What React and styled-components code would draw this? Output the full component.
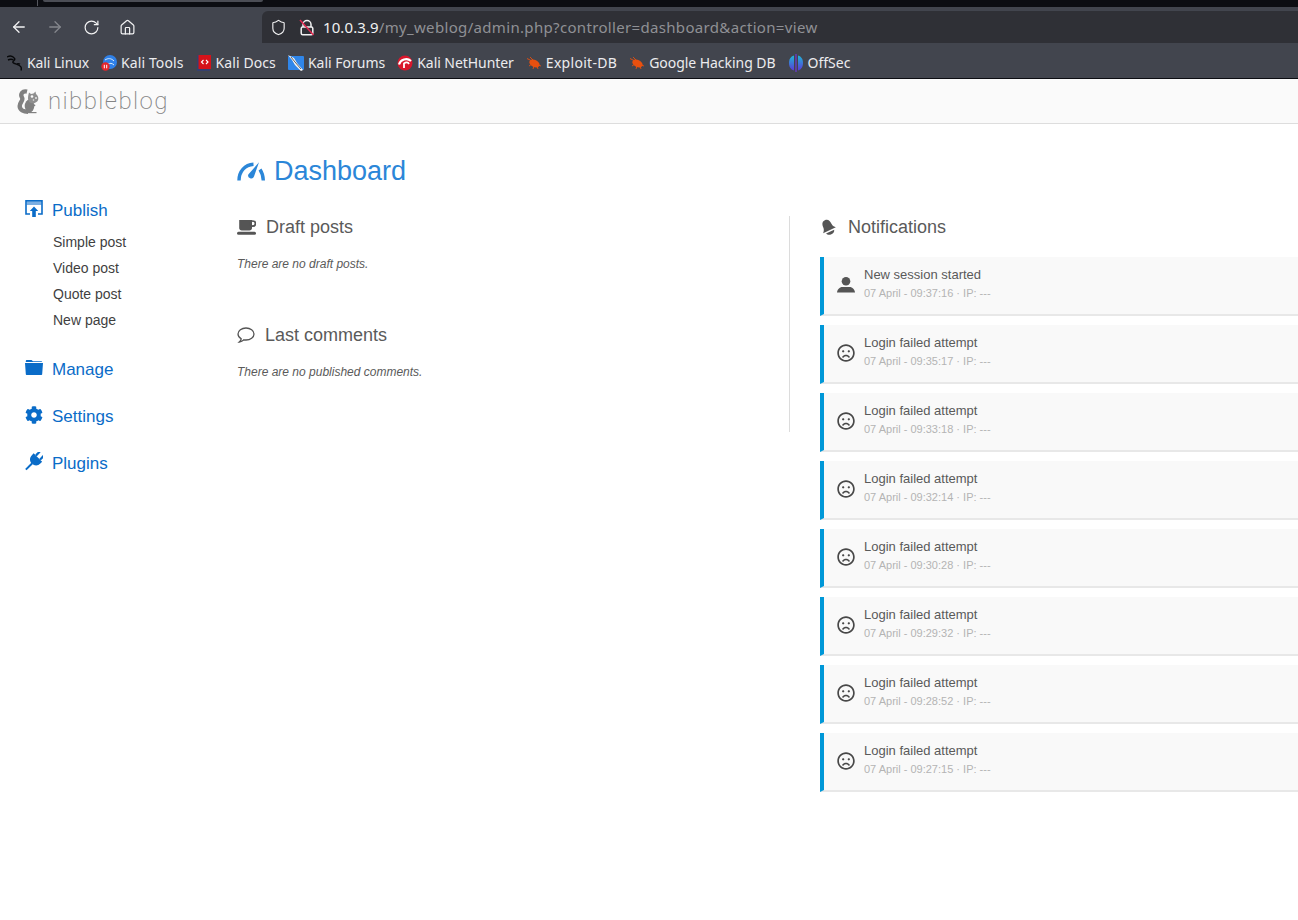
import React from "react";
import styled, { createGlobalStyle } from "styled-components";
import { ArrowLeft, ArrowRight, RotateCw, Home, Shield } from "lucide-react";
import { FaRegFrown, FaCog } from "react-icons/fa";

const GlobalStyle = createGlobalStyle`
  html, body { margin: 0; padding: 0; background: #fff; }
  body { font-family: "Liberation Sans", Arial, sans-serif; width: 1298px; height: 920px; overflow: hidden; }
  * { box-sizing: border-box; }
`;

const Page = styled.div`
  width: 1298px;
  height: 920px;
  display: flex;
  flex-direction: column;
  overflow: hidden;
`;

const TopStrip = styled.div`
  height: 7px;
  background: #0c0d12;
  display: flex;
  padding-left: 37px;
`;
const TabDivider = styled.div`
  width: 1px;
  height: 6px;
  background: #55575e;
  margin-right: 5px;
`;
const TabEdge = styled.div`
  width: 220px;
  height: 2px;
  background: #4b4d55;
  border-radius: 0 0 3px 3px;
`;

const Toolbar = styled.div`
  height: 36px;
  background: #42454e;
  display: flex;
  padding-top: 4px;
`;
const NavButtons = styled.div`
  width: 262px;
  padding-left: 1px;
  display: flex;
  align-items: center;
  flex-shrink: 0;
`;
const NavButton = styled.div`
  width: 36px;
  display: flex;
  justify-content: center;
  align-items: center;
  color: ${(p) => (p.$dim ? "#85878d" : "#f2f2f3")};
`;
const AddressBar = styled.div`
  flex: 1;
  background: #2f3036;
  border-radius: 6px 0 0 0;
  display: flex;
  align-items: center;
  gap: 12px;
  padding-left: 8px;
  color: #f2f2f3;
`;
const UrlText = styled.div`
  font-family: "Noto Sans", sans-serif;
  font-size: 15px;
  margin-left: -4px;
  letter-spacing: 0.33px;
  color: #8f9095;
  white-space: nowrap;
`;
const UrlHost = styled.span`
  color: #f0f0f1;
  letter-spacing: 0.1px;
`;

const BookmarksBar = styled.div`
  height: 36px;
  background: #42454e;
  border-bottom: 1px solid #0c0d12;
  display: flex;
  align-items: center;
  padding: 4px 0 0 7px;
  gap: 12px;
`;
const Bookmark = styled.div`
  display: flex;
  align-items: center;
  gap: 4px;
  font-family: "Noto Sans", sans-serif;
  font-size: 14px;
  letter-spacing: ${(p) => p.$track || 0}px;
  color: #ececee;
  white-space: nowrap;
`;

const SiteHeader = styled.header`
  height: 45px;
  background: #fafafa;
  border-bottom: 1px solid #dddddd;
  display: flex;
  align-items: center;
  padding-left: 17px;
  gap: 9px;
  flex-shrink: 0;
`;
const LogoText = styled.div`
  font-family: Roboto, sans-serif;
  font-weight: 200;
  font-size: 24px;
  letter-spacing: 1.4px;
  color: #858585;
  margin-top: -1px;
`;

const Body = styled.div`
  display: flex;
  flex: 1;
`;

const Sidebar = styled.nav`
  width: 237px;
  flex-shrink: 0;
  padding: 76px 0 0 25px;
`;
const MenuGroup = styled.div`
  margin-bottom: 26px;
`;
const MenuTitle = styled.div`
  display: flex;
  align-items: center;
  height: 21px;
  font-size: 17px;
  color: #0a6cc8;
`;
const MenuIcon = styled.span`
  width: 27px;
  display: flex;
  align-items: center;
  margin-top: -4px;
`;
const SubMenu = styled.div`
  margin-top: 8px;
  padding-left: 28px;
`;
const SubItem = styled.div`
  height: 26px;
  line-height: 26px;
  font-size: 14px;
  color: #3f3f3f;
`;

const Main = styled.main`
  flex: 1;
  display: flex;
  flex-direction: column;
  min-width: 0;
`;
const PageTitle = styled.h1`
  margin: 31px 0 0;
  height: 32px;
  display: flex;
  align-items: center;
  gap: 9px;
  font-size: 27px;
  font-weight: 400;
  color: #2b86d8;
`;
const Columns = styled.div`
  display: flex;
  margin-top: 29px;
  align-items: flex-start;
`;
const LeftColumn = styled.section`
  width: 553px;
  height: 216px;
  border-right: 1px solid #dcdcdc;
  flex-shrink: 0;
`;
const RightColumn = styled.section`
  flex: 1;
  padding-left: 30px;
`;
const SectionHeading = styled.h2`
  margin: 0;
  height: 22px;
  display: flex;
  align-items: center;
  font-size: 18px;
  font-weight: 400;
  color: #5a5a5a;
  gap: ${(p) => p.$gap || 10}px;
`;
const EmptyNote = styled.p`
  margin: 19px 0 53px;
  height: 14px;
  line-height: 14px;
  font-size: 12px;
  font-style: italic;
  color: #5a5a5a;
`;
const NotificationList = styled.div`
  margin-top: 19px;
  display: flex;
  flex-direction: column;
  gap: 9px;
`;
const Notification = styled.div`
  height: 59px;
  background: #f9f9f9;
  border-left: 4px solid #0098d8;
  border-bottom: 2px solid #e8e8e8;
  display: flex;
  align-items: center;
  padding-left: 13px;
  color: #484848;
`;
const NotificationIcon = styled.span`
  width: 27px;
  display: flex;
  margin-top: -1px;
`;
const NotificationText = styled.div`
  display: flex;
  flex-direction: column;
  margin-top: -2px;
`;
const NotificationTitle = styled.div`
  font-size: 13px;
  line-height: 18px;
  color: #5a5a5a;
`;
const NotificationMeta = styled.div`
  font-size: 11px;
  line-height: 19px;
  color: #b4b4b4;
`;

const GaugeIcon = () => (
  <svg width="28" height="19" viewBox="0 0 28 19" fill="none" stroke="#2b86d8" strokeWidth="3.4">
    <path d="M2 18.500 C2 9.500 8 2.800 16.500 2.300" />
    <path d="M22 .2 L17 14.500 A3 3 0 1 1 11.300 12.500 Z" fill="#2b86d8" stroke="none" />
    <path d="M23 7.500 C25 10.500 26.200 14.500 26.300 18.500" />
  </svg>
);

const PublishIcon = () => (
  <svg width="18" height="17" viewBox="0 0 18 17" fill="none">
    <rect x="1.500" y="2" width="15" height="3" fill="#7aaee2" />
    <path d="M5 14H1V.9h16V14h-4" stroke="#0a6cc8" strokeWidth="1.600" />
    <path d="M9 6.500l4.200 4.500h-2.400v6H7.200v-6H4.800z" fill="#0a6cc8" />
  </svg>
);

const FolderIcon = () => (
  <svg width="18" height="15" viewBox="0 0 18 15" fill="#0a6cc8">
    <path d="M.8 2V1.200C.8.500 1.300 0 2 0h4.500L8 1.200h8.200c.6 0 1 .3 1 .8z" />
    <path d="M0 3h18l-.8 11c0 .6-.5 1-1 1H1.800c-.5 0-1-.4-1-1z" />
  </svg>
);

const PlugIcon = () => (
  <svg width="18" height="19" viewBox="0 0 18 19" fill="#0a6cc8">
    <g transform="rotate(45 9 9.500)">
      <rect x="5" y="-2" width="2.200" height="6" rx="1" />
      <rect x="10.800" y="-2" width="2.200" height="6" rx="1" />
      <path d="M3 4h12v2.500c0 3.500-2.500 6-6 6s-6-2.500-6-6z" />
      <rect x="8" y="12" width="2" height="9" />
    </g>
  </svg>
);

const CoffeeIcon = () => (
  <svg width="19" height="15" viewBox="0 0 19 15" fill="#555555">
    <path d="M2.200 0H15v8c0 1.500-1.200 2.500-2.500 2.500H4.700C3.300 10.500 2.200 9.500 2.200 8z" />
    <circle cx="15.800" cy="3.600" r="2.600" fill="none" stroke="#555555" strokeWidth="1.700" />
    <rect x="0" y="11.800" width="19" height="3" rx="1.500" />
  </svg>
);

const CommentIcon = () => (
  <svg width="18" height="16" viewBox="0 0 18 16" fill="none" stroke="#555555" strokeWidth="1.300">
    <path d="M9 1C4.600 1 1 3.700 1 7c0 2 1.300 3.700 3.200 4.800-.2 1.200-.9 2.300-1.900 3.200 1.800-.2 3.400-1 4.700-2.200.6.1 1.300.2 2 .2 4.400 0 8-2.700 8-6s-3.600-6-8-6z" />
  </svg>
);

const BellIcon = () => (
  <svg width="16" height="17" viewBox="0 0 16 17" fill="#555555">
    <g transform="rotate(-25 8 8)">
      <path d="M8 .5C4.500.5 3.500 3.500 3.500 6.500 3.500 9 2 10.500 1 11.500h14c-1-1-2.500-2.500-2.500-5 0-3-1-6-4.500-6z" />
      <path d="M3.500 13h9c-.6 2-2.300 3-4.500 3s-3.900-1-4.500-3z" />
    </g>
  </svg>
);

const UserIcon = () => (
  <svg width="18" height="16" viewBox="0 0 18 16" fill="#555555">
    <circle cx="9" cy="4.300" r="4.300" />
    <path d="M0 15.500c.2-3 2.500-5.500 5.500-5.500h7c3 0 5.300 2.500 5.500 5.500z" />
  </svg>
);

const SquirrelLogo = () => (
  <svg width="22" height="25" viewBox="0 0 22 25">
    <path d="M10 2.600C5.500 1.500 3 5 5 8.500c1.800 3-2.300 4.500-2.300 8.500 0 4 4 5.700 8.300 5.700" fill="none" stroke="#808080" strokeWidth="4.400" />
    <ellipse cx="12.500" cy="17" rx="4.800" ry="6.500" fill="#808080" />
    <path d="M11 23h8.500v1.200H11z" fill="#808080" />
    <path d="M12 3.500l2 1.500 2.500-.5 2-2 .5 2.500c1.500 1 2.500 3 2.300 5-.3 2.500-2.800 4.300-5.500 4.300-2.800 0-4.800-2-4.800-5 0-2.500.6-4.300 1-5.800z" fill="#8f8f8f" />
    <circle cx="15" cy="7.500" r="1.300" fill="#fafafa" />
    <circle cx="19" cy="9" r="1" fill="#e6e6e6" />
    <circle cx="16.500" cy="11" r=".8" fill="#e6e6e6" />
    <path d="M15 14.500l3.500 1.500-.6 1.200-3.400-1.200z" fill="#808080" />
  </svg>
);

const LockOff = () => (
  <svg width="16" height="17" viewBox="0 0 16 17" fill="none">
    <path d="M4 8V5.500a4 4 0 0 1 8 0V8" stroke="#f2f2f3" strokeWidth="1.500" />
    <rect x="2.200" y="8" width="11.600" height="7.800" rx="1.500" stroke="#f2f2f3" strokeWidth="1.500" />
    <path d="M1 1l13.500 15" stroke="#e22850" strokeWidth="1.500" />
  </svg>
);

const KaliIcon = () => (
  <svg width="16" height="16" viewBox="0 0 16 16" fill="none" stroke="#08090b" strokeWidth="1.400">
    <path d="M0 2c3-1.600 6-.8 7.500 1.400C9 5.500 5 6 6 7.500c1.500 2 6.500 1.500 8 4.500.4 1.300.4 2.500 0 3.500" />
    <path d="M1 5c2-1 4-1 5.500 0M10 9c1-.5 1.800-.4 3 .2" />
  </svg>
);
const ToolsIcon = () => (
  <svg width="16" height="16" viewBox="0 0 16 16">
    <circle cx="9" cy="7" r="7" fill="#2f80e8" />
    <path d="M4 5c3-2 6-2 9 1M7 9c2-1 4-1 6 1" stroke="#d8ecfb" strokeWidth="1" fill="none" />
    <circle cx="4.500" cy="11.500" r="4.200" fill="#e3262c" />
    <path d="M3.300 9.800v3.500M5.700 9.800v3.500" stroke="#fff" strokeWidth="1" />
  </svg>
);
const DocsIcon = () => (
  <svg width="16" height="16" viewBox="0 0 16 16">
    <rect x="1" y="0" width="13" height="16" fill="#35406e" />
    <rect x="2.500" y="0" width="12.500" height="14" fill="#d5121a" />
    <path d="M7.500 5l-2 2 2 2M10 5l2 2-2 2" stroke="#fff" strokeWidth="1.100" fill="none" />
  </svg>
);
const ForumsIcon = () => (
  <svg width="16" height="16" viewBox="0 0 16 16">
    <rect y="1" width="16" height="14" rx="1" fill="#2f86ea" />
    <path d="M0 0l6 3 3 5 6 7-2 1-6-6-3-5z" fill="#f4f6f8" />
    <path d="M3 2l4 5 6 7" stroke="#222" strokeWidth=".7" fill="none" />
  </svg>
);
const HunterIcon = () => (
  <svg width="16" height="16" viewBox="0 0 16 16">
    <circle cx="8" cy="8" r="7.500" fill="#d9162c" />
    <path d="M2 9.500C3.500 4.500 10 2.500 14 6" stroke="#fff" strokeWidth="2.200" fill="none" />
    <path d="M7 13V8.500c2-1.500 4-1.500 5 .5" stroke="#fff" strokeWidth="1.800" fill="none" />
  </svg>
);
const BugIcon = () => (
  <svg width="16" height="14" viewBox="0 0 16 14">
    <ellipse cx="8.500" cy="7.500" rx="5.500" ry="3.500" fill="#e8500f" transform="rotate(25 8.500 7.500)" />
    <path d="M1 2.500L6 5M4 1l3 3M3 10l3-2M7 13l1-3M12 13l-1-3M15 10l-3-1" stroke="#e8500f" strokeWidth=".9" />
  </svg>
);
const OffSecIcon = () => (
  <svg width="16" height="18" viewBox="0 0 16 18">
    <defs>
      <linearGradient id="offsecA" x1="0" y1="0" x2="0" y2="1">
        <stop offset="0" stopColor="#1fb6d8" />
        <stop offset="1" stopColor="#5a3ad8" />
      </linearGradient>
    </defs>
    <path d="M6 1.500C2.500 2.500 1 5.500 1 9s1.500 6.500 5 7.500z" fill="url(#offsecA)" />
    <path d="M10 1.500c3.500 1 5 4 5 7.500s-1.500 6.500-5 7.500z" fill="url(#offsecA)" />
    <path d="M8 0v18" stroke="#6a3ad0" strokeWidth="1.300" />
  </svg>
);

const bookmarks = [
  { label: "Kali Linux", icon: <KaliIcon />, track: -0.1 },
  { label: "Kali Tools", icon: <ToolsIcon />, track: 0.1 },
  { label: "Kali Docs", icon: <DocsIcon />, track: 0.1 },
  { label: "Kali Forums", icon: <ForumsIcon /> },
  { label: "Kali NetHunter", icon: <HunterIcon />, track: -0.06 },
  { label: "Exploit-DB", icon: <BugIcon />, track: 0.3 },
  { label: "Google Hacking DB", icon: <BugIcon />, track: -0.05 },
  { label: "OffSec", icon: <OffSecIcon /> },
];

const menus = [
  { label: "Manage", icon: <FolderIcon /> },
  { label: "Settings", icon: <FaCog size={18} /> },
  { label: "Plugins", icon: <PlugIcon /> },
];

const notifications = [
  { title: "New session started", time: "07 April - 09:37:16", user: true },
  { title: "Login failed attempt", time: "07 April - 09:35:17" },
  { title: "Login failed attempt", time: "07 April - 09:33:18" },
  { title: "Login failed attempt", time: "07 April - 09:32:14" },
  { title: "Login failed attempt", time: "07 April - 09:30:28" },
  { title: "Login failed attempt", time: "07 April - 09:29:32" },
  { title: "Login failed attempt", time: "07 April - 09:28:52" },
  { title: "Login failed attempt", time: "07 April - 09:27:15" },
];

export default function App() {
  return (
    <Page>
      <GlobalStyle />
      <TopStrip>
        <TabDivider />
        <TabEdge />
      </TopStrip>
      <Toolbar>
        <NavButtons>
          <NavButton><ArrowLeft size={18} strokeWidth={1.7} /></NavButton>
          <NavButton $dim><ArrowRight size={18} strokeWidth={1.7} /></NavButton>
          <NavButton><RotateCw size={17} strokeWidth={1.7} /></NavButton>
          <NavButton><Home size={17} strokeWidth={1.7} /></NavButton>
        </NavButtons>
        <AddressBar>
          <Shield size={17} strokeWidth={1.6} />
          <LockOff />
          <UrlText><UrlHost>10.0.3.9</UrlHost>/my_weblog/admin.php?controller=dashboard&amp;action=view</UrlText>
        </AddressBar>
      </Toolbar>
      <BookmarksBar>
        {bookmarks.map((b) => (
          <Bookmark key={b.label} $track={b.track}>{b.icon}{b.label}</Bookmark>
        ))}
      </BookmarksBar>
      <SiteHeader>
        <SquirrelLogo />
        <LogoText>nibbleblog</LogoText>
      </SiteHeader>
      <Body>
        <Sidebar>
          <MenuGroup>
            <MenuTitle><MenuIcon><PublishIcon /></MenuIcon>Publish</MenuTitle>
            <SubMenu>
              <SubItem>Simple post</SubItem>
              <SubItem>Video post</SubItem>
              <SubItem>Quote post</SubItem>
              <SubItem>New page</SubItem>
            </SubMenu>
          </MenuGroup>
          {menus.map((m) => (
            <MenuGroup key={m.label}>
              <MenuTitle><MenuIcon>{m.icon}</MenuIcon>{m.label}</MenuTitle>
            </MenuGroup>
          ))}
        </Sidebar>
        <Main>
          <PageTitle><GaugeIcon />Dashboard</PageTitle>
          <Columns>
            <LeftColumn>
              <SectionHeading $gap={10}><CoffeeIcon />Draft posts</SectionHeading>
              <EmptyNote>There are no draft posts.</EmptyNote>
              <SectionHeading $gap={10}><CommentIcon />Last comments</SectionHeading>
              <EmptyNote>There are no published comments.</EmptyNote>
            </LeftColumn>
            <RightColumn>
              <SectionHeading $gap={12}><BellIcon />Notifications</SectionHeading>
              <NotificationList>
                {notifications.map((n) => (
                  <Notification key={n.time}>
                    <NotificationIcon>
                      {n.user ? <UserIcon /> : <FaRegFrown size={18} />}
                    </NotificationIcon>
                    <NotificationText>
                      <NotificationTitle>{n.title}</NotificationTitle>
                      <NotificationMeta>{n.time} · IP: ---</NotificationMeta>
                    </NotificationText>
                  </Notification>
                ))}
              </NotificationList>
            </RightColumn>
          </Columns>
        </Main>
      </Body>
    </Page>
  );
}
